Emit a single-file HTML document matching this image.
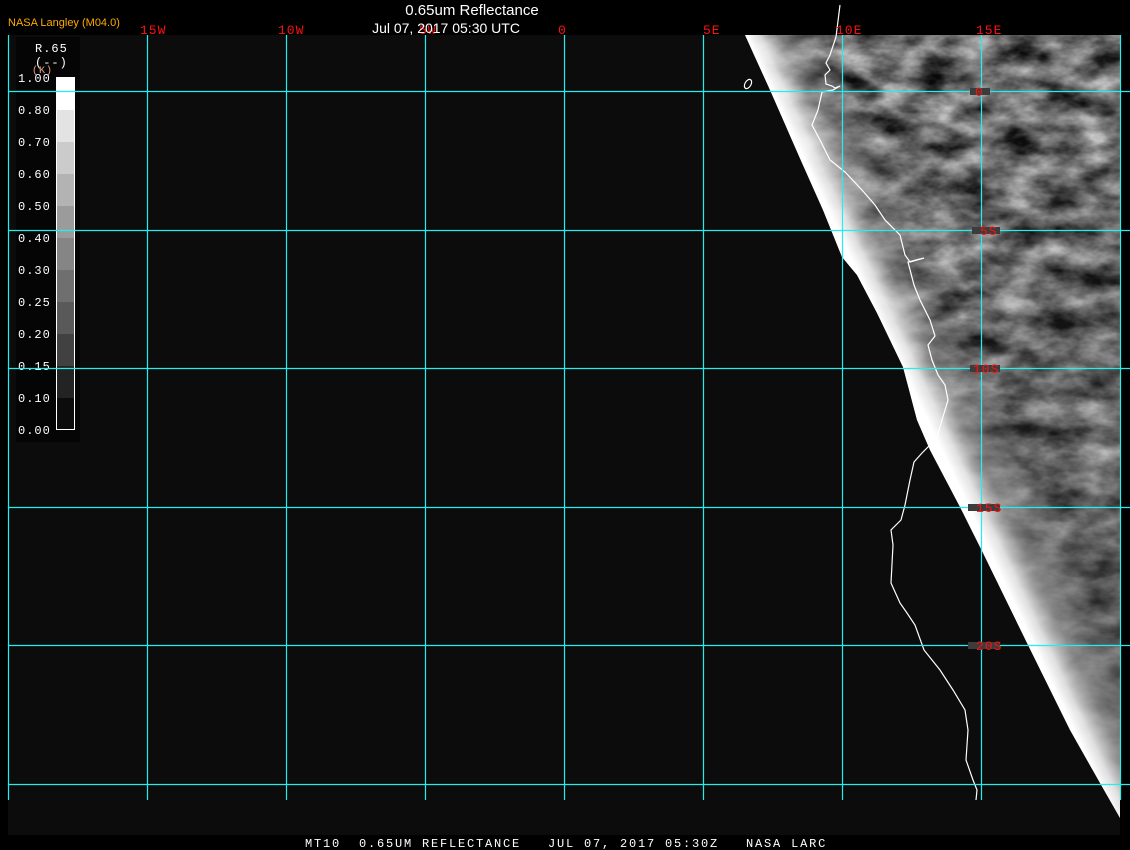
<!DOCTYPE html>
<html><head><meta charset="utf-8"><style>
html,body{margin:0;padding:0;background:#000;}
body{width:1130px;height:850px;position:relative;overflow:hidden;font-family:"Liberation Sans",sans-serif;}
svg{position:absolute;left:0;top:0;}
</style></head><body>
<svg width="1130" height="850" viewBox="0 0 1130 850" xmlns="http://www.w3.org/2000/svg">
<defs>
<linearGradient id="g" gradientUnits="userSpaceOnUse" x1="930" y1="425" x2="1002" y2="391">
<stop offset="0" stop-color="#ffffff" stop-opacity="1"/>
<stop offset="0.15" stop-color="#eeeeee" stop-opacity="0.9"/>
<stop offset="0.4" stop-color="#aaaaaa" stop-opacity="0.55"/>
<stop offset="0.75" stop-color="#888888" stop-opacity="0.2"/>
<stop offset="1" stop-color="#666666" stop-opacity="0"/>
</linearGradient>
<filter id="t" x="0" y="0" width="100%" height="100%" color-interpolation-filters="sRGB">
<feTurbulence type="fractalNoise" baseFrequency="0.025 0.045" numOctaves="4" seed="7"/>
<feColorMatrix type="matrix" values="1.3 0 0 0 -0.22  1.3 0 0 0 -0.22  1.3 0 0 0 -0.22  0 0 0 0 1"/>
</filter>
<linearGradient id="fade" x1="0" y1="0" x2="0" y2="1">
<stop offset="0" stop-color="#fff" stop-opacity="0.9"/>
<stop offset="0.45" stop-color="#fff" stop-opacity="0.7"/>
<stop offset="1" stop-color="#fff" stop-opacity="0.3"/>
</linearGradient>
<mask id="m"><rect x="740" y="35" width="380" height="800" fill="url(#fade)"/></mask>
<clipPath id="cp"><polygon points="745,35 770,90 802,163 823,210 842,257 857,275 877,313 903,367 917,420 930,450 960,507 983,553 1027,643 1070,730 1100,783 1120,818 1120,35"/></clipPath>
</defs>
<rect x="8" y="35" width="1112" height="801" fill="#0c0c0c"/>
<polygon points="745,35 770,90 802,163 823,210 842,257 857,275 877,313 903,367 917,420 930,450 960,507 983,553 1027,643 1070,730 1100,783 1120,818 1120,35" fill="#4a4a4a"/>
<g clip-path="url(#cp)"><rect x="740" y="35" width="380" height="800" filter="url(#t)" mask="url(#m)"/></g>
<polygon points="745,35 770,90 802,163 823,210 842,257 857,275 877,313 903,367 917,420 930,450 960,507 983,553 1027,643 1070,730 1100,783 1120,818 1120,35" fill="url(#g)"/>
<rect x="16" y="37" width="64" height="405" fill="#050505"/>
<g>
<rect x="56" y="77" width="19" height="33" fill="#fff"/>
<rect x="56" y="110" width="19" height="32" fill="#e3e3e3"/>
<rect x="56" y="142" width="19" height="32" fill="#cbcbcb"/>
<rect x="56" y="174" width="19" height="32" fill="#b3b3b3"/>
<rect x="56" y="206" width="19" height="32" fill="#9b9b9b"/>
<rect x="56" y="238" width="19" height="32" fill="#858585"/>
<rect x="56" y="270" width="19" height="32" fill="#6f6f6f"/>
<rect x="56" y="302" width="19" height="32" fill="#595959"/>
<rect x="56" y="334" width="19" height="32" fill="#414141"/>
<rect x="56" y="366" width="19" height="32" fill="#232323"/>
<rect x="56" y="398" width="19" height="32" fill="#0c0c0c"/>
<rect x="56.5" y="77.5" width="18" height="352" fill="none" stroke="#fff" stroke-width="1"/>
</g>
<g font-family="Liberation Mono, monospace" font-size="12" fill="#fff" letter-spacing="1">
<text x="35" y="52">R.65</text>
<text x="35" y="66">(--)</text>
<text x="32" y="73" fill="#e8a080" font-size="10">(K)</text>
<text x="18" y="82">1.00</text>
<text x="18" y="114">0.80</text>
<text x="18" y="146">0.70</text>
<text x="18" y="178">0.60</text>
<text x="18" y="210">0.50</text>
<text x="18" y="242">0.40</text>
<text x="18" y="274">0.30</text>
<text x="18" y="306">0.25</text>
<text x="18" y="338">0.20</text>
<text x="18" y="370">0.15</text>
<text x="18" y="402">0.10</text>
<text x="18" y="434">0.00</text>
</g>
<polyline fill="none" stroke="#fff" stroke-width="1.2" points="840,5 836,37 830,55 826,63 830,70 825,75 826,84 832,86 835,88 840,86 833,90 822,92 818,110 812,125 820,140 830,160 845,172 862,190 875,205 885,220 900,235 905,255 910,262 924,258 908,262 914,285 920,300 930,320 935,336 928,345 932,360 938,375 945,385 948,400 942,420 936,440 930,445 922,453 914,462 910,480 905,505 901,520 891,530 893,545 891,583 900,603 907,613 915,625 924,650 940,670 953,690 965,710 968,730 966,760 973,780 977,790 976,800"/>
<ellipse cx="748" cy="84" rx="3" ry="5" transform="rotate(30 748 84)" fill="none" stroke="#fff" stroke-width="1.2"/>
<g stroke="#22eeee" stroke-width="1.2">
<line x1="8.5" y1="35" x2="8.5" y2="800"/>
<line x1="147.5" y1="35" x2="147.5" y2="800"/>
<line x1="286.5" y1="35" x2="286.5" y2="800"/>
<line x1="425.5" y1="35" x2="425.5" y2="800"/>
<line x1="564.5" y1="35" x2="564.5" y2="800"/>
<line x1="703.5" y1="35" x2="703.5" y2="800"/>
<line x1="842.5" y1="35" x2="842.5" y2="800"/>
<line x1="981.5" y1="35" x2="981.5" y2="800"/>
<line x1="1120.5" y1="35" x2="1120.5" y2="800"/>
<line x1="8" y1="91.5" x2="1130" y2="91.5"/>
<line x1="8" y1="230.5" x2="1130" y2="230.5"/>
<line x1="8" y1="368.5" x2="1130" y2="368.5"/>
<line x1="8" y1="507.5" x2="1130" y2="507.5"/>
<line x1="8" y1="645.5" x2="1130" y2="645.5"/>
<line x1="8" y1="784.5" x2="1130" y2="784.5"/>
</g>
<g fill="#3c3c3c"><rect x="970" y="88" width="20" height="7"/><rect x="972" y="227" width="28" height="7"/><rect x="970" y="365" width="30" height="7"/><rect x="968" y="504" width="32" height="7"/><rect x="968" y="642" width="32" height="7"/></g>
<g font-family="Liberation Mono, monospace" font-size="13" fill="#ff1010" letter-spacing="1">
<text x="140" y="34">15W</text>
<text x="278" y="34">10W</text>
<text x="419" y="34">5W</text>
<text x="558" y="34">0</text>
<text x="703" y="34">5E</text>
<text x="836" y="34">10E</text>
<text x="976" y="34">15E</text>
<text x="975" y="96">0</text>
<text x="980" y="235">5S</text>
<text x="973" y="373">10S</text>
<text x="976" y="512">15S</text>
<text x="976" y="650">20S</text>
</g>
<text x="472" y="15" text-anchor="middle" font-size="15" fill="#fff">0.65um Reflectance</text>
<text x="446" y="33" text-anchor="middle" font-size="14" fill="#fff">Jul 07, 2017 05:30 UTC</text>
<text x="8" y="26" font-size="11" fill="#ffaa00">NASA Langley (M04.0)</text>
<rect x="0" y="835" width="1130" height="15" fill="#000"/>
<text x="305" y="847" font-family="Liberation Mono, monospace" font-size="12" fill="#fff" letter-spacing="1.8" style="white-space:pre">MT10  0.65UM REFLECTANCE   JUL 07, 2017 05:30Z   NASA LARC</text>
</svg>
</body></html>
